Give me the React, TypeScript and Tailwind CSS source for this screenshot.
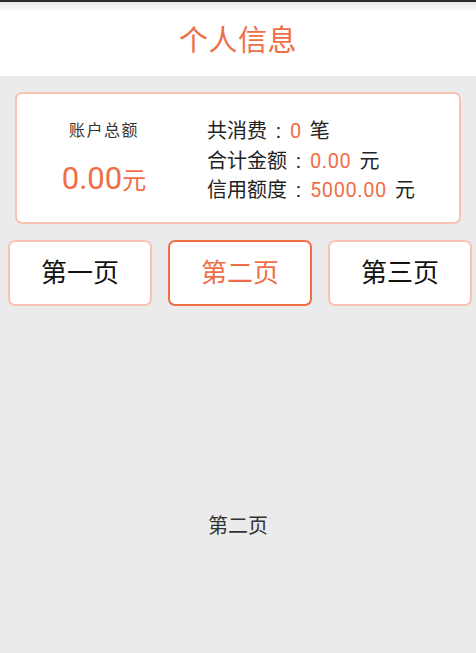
import React from "react";

const font = { fontFamily: 'Roboto, "Noto Sans CJK SC", sans-serif' };

const pages = ["第一页", "第二页", "第三页"];

const Row = ({ label, value, unit }: { label: string; value: string; unit: string }) => (
  <p>
    {label}
    <span className="inline-block w-[23px] text-center">:</span>
    <span className="text-[#f06e47] tracking-[0.6px]">{value}</span>
    <span className="ml-[8px]">{unit}</span>
  </p>
);

const App = () => {
  const current = 1;

  return (
    <div className="w-[476px] h-[653px] bg-[#ebebeb] flex flex-col" style={font}>
      <div className="h-[76px] bg-white relative flex items-center justify-center">
        <div className="absolute top-0 left-0 right-0 h-[2px] bg-[#2a2a2a]" />
        <div className="absolute top-[2px] left-0 right-0 h-[10px] bg-gradient-to-b from-[#e6e6e6] to-white" />
        <h1 className="relative text-[29px] leading-none text-[#f06e47] tracking-[0.5px] mt-[6px]">个人信息</h1>
      </div>

      <div className="mx-[15px] mt-[16px] h-[132px] bg-white border-2 border-[#f8c3b2] rounded-[7px] flex items-center">
        <div className="w-[174px] flex flex-col items-center">
          <p className="text-[16px] leading-none text-[#333] tracking-[1.5px]">账户总额</p>
          <p className="mt-[24px] text-[#f06e47] leading-none">
            <span className="text-[31px]">0.00</span>
            <span className="text-[24px]">元</span>
          </p>
        </div>
        <div className="ml-[16px] text-[20px] leading-[29.5px] text-[#222] pt-[7px]">
          <Row label="共消费" value="0" unit="笔" />
          <Row label="合计金额" value="0.00" unit="元" />
          <Row label="信用额度" value="5000.00" unit="元" />
        </div>
      </div>

      <div className="mt-[16px] pl-[8px] flex gap-[16px]">
        {pages.map((p, i) => (
          <button
            key={p}
            className={
              i === current
                ? "w-[144px] h-[66px] shrink-0 bg-white rounded-[7px] border-2 border-[#ef6c45] text-[26px] text-[#f06e47]"
                : "w-[144px] h-[66px] shrink-0 bg-white rounded-[7px] border-2 border-[#f8c3b2] text-[26px] text-[#111]"
            }
          >
            {p}
          </button>
        ))}
      </div>

      <p className="mt-[206px] text-center text-[20px] leading-[28px] text-[#333]">{pages[current]}</p>
    </div>
  );
};

export default App;
